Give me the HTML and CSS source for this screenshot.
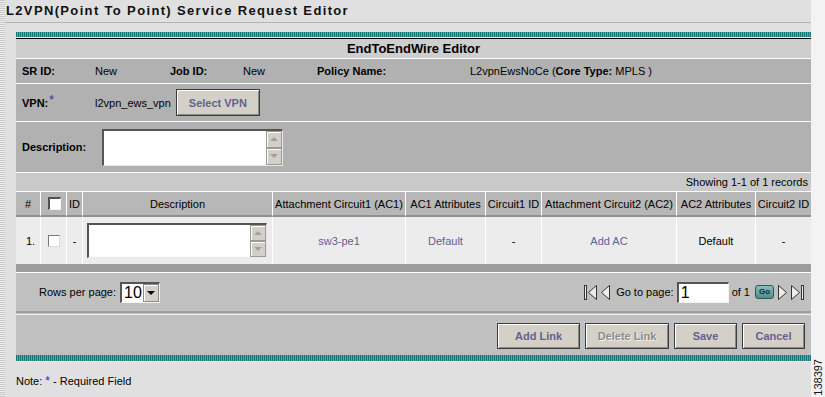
FILE: index.html
```html
<!DOCTYPE html>
<html>
<head>
<meta charset="utf-8">
<title>L2VPN Service Request Editor</title>
<link rel="stylesheet" href="styles.css">
</head>
<body>
<div class="page">
  <div class="strip"></div>
  <div class="main">
    <div class="title">L2VPN(Point To Point) Service Request Editor</div>
    <div class="panel">
      <div class="teal"></div>
      <div class="head">EndToEndWire Editor</div>
      <div class="info info-ids">
        <span class="lbl">SR ID:</span><span>New</span>
        <span class="lbl">Job ID:</span><span>New</span>
        <span class="lbl">Policy Name:</span><span>L2vpnEwsNoCe (<b>Core Type:</b> MPLS )</span>
      </div>
      <div class="info info-vpn">
        <span class="lbl">VPN:<sup class="req">*</sup></span>
        <span class="vpnval">l2vpn_ews_vpn<button class="btn btn-vpn">Select VPN</button></span>
      </div>
      <div class="info info-desc">
        <span class="lbl">Description:</span>
        <div class="tbox tbox-desc">
          <div class="tarea"></div>
          <div class="sb"><span class="sbb"><i class="tri-up"></i></span><span class="sbb"><i class="tri-down"></i></span></div>
        </div>
      </div>
      <div class="showing">Showing 1-1 of 1 records</div>
      <table class="grid">
        <colgroup>
          <col class="w-num"><col class="w-chk"><col class="w-id"><col class="w-desc"><col class="w-ac1"><col class="w-a1"><col class="w-c1"><col class="w-ac2"><col class="w-a2"><col class="w-c2">
        </colgroup>
        <thead>
          <tr>
            <th>#</th><th><span class="chk chk-h"></span></th><th>ID</th><th>Description</th><th>Attachment Circuit1 (AC1)</th><th>AC1 Attributes</th><th>Circuit1 ID</th><th>Attachment Circuit2 (AC2)</th><th>AC2 Attributes</th><th>Circuit2 ID</th>
          </tr>
        </thead>
        <tbody>
          <tr>
            <td class="num">1.</td><td><span class="chk chk-r"></span></td><td>-</td>
            <td class="dcell"><div class="tbox tbox-row"><div class="tarea"></div><div class="sb"><span class="sbb"><i class="tri-up"></i></span><span class="sbb"><i class="tri-down"></i></span></div></div></td>
            <td><a class="lnk">sw3-pe1</a></td><td><a class="lnk">Default</a></td><td>-</td><td><a class="lnk">Add AC</a></td><td>Default</td><td>-</td>
          </tr>
        </tbody>
      </table>
      <div class="band"></div>
      <div class="pager">
        <div class="rpp">Rows per page:<span class="sel"><span class="selv">10</span><span class="selb"><i class="tri-down dk"></i></span></span></div>
        <div class="nav">
          <svg class="ic" width="13" height="17" viewBox="0 0 13 17"><rect x="0.5" y="1.5" width="2" height="14" fill="#ececec" stroke="#333"/><path d="M12.5 1.5 L4.5 8.5 L12.5 15.5 Z" fill="#ececec" stroke="#333"/></svg>
          <svg class="ic" width="9" height="17" viewBox="0 0 9 17"><path d="M8.5 1.5 L0.5 8.5 L8.5 15.5 Z" fill="#ececec" stroke="#333"/></svg>
          <span class="gtp">Go to page:</span>
          <span class="pin">1</span>
          <span class="of">of 1</span>
          <span class="go">Go</span>
          <svg class="ic" width="9" height="17" viewBox="0 0 9 17"><path d="M0.5 1.5 L8.5 8.5 L0.5 15.5 Z" fill="#ececec" stroke="#333"/></svg>
          <svg class="ic" width="14" height="17" viewBox="0 0 14 17"><path d="M0.5 1.5 L8.5 8.5 L0.5 15.5 Z" fill="#ececec" stroke="#333"/><rect x="10.5" y="1.5" width="2" height="14" fill="#ececec" stroke="#333"/></svg>
        </div>
      </div>
      <div class="sep"></div>
      <div class="actions">
        <button class="btn btn-add">Add Link</button>
        <button class="btn btn-del">Delete Link</button>
        <button class="btn btn-save">Save</button>
        <button class="btn btn-cancel">Cancel</button>
      </div>
      <div class="teal teal-b"></div>
    </div>
    <div class="note">Note: <span class="req">*</span> - Required Field</div>
  </div>
  <div class="side"><span class="fig">138397</span></div>
</div>
</body>
</html>
```

FILE: styles.css
```css
* { box-sizing: border-box; }
html, body { margin: 0; padding: 0; }
body {
  width: 825px;
  height: 397px;
  overflow: hidden;
  background: #f3f3f3;
  font-family: "Liberation Sans", Arial, sans-serif;
  font-size: 11px;
  color: #000;
}
.page { display: flex; height: 397px; }
.strip {
  width: 5px;
  flex: none;
  background: repeating-linear-gradient(180deg, #c9c9c9 0 1px, #ececec 1px 2px);
}
.main {
  width: 806px;
  flex: none;
  background: #e0e0e0;
  display: flex;
  flex-direction: column;
}
.title {
  height: 23px;
  line-height: 22px;
  border-bottom: 1px solid #b3b3b3;
  padding-left: 1px;
  font-weight: bold;
  font-size: 13px;
  letter-spacing: 1.35px;
  color: #111;
  white-space: nowrap;
}
.panel { margin: 9px 0 0 11px; width: 795px; }
.teal {
  height: 6px;
  background: repeating-linear-gradient(90deg, #167777 0 1px, #5ba7a7 1px 2px);
  border-bottom: 1px solid #ececec;
}
.head {
  height: 21px;
  border-top: 1px solid #000;
  border-bottom: 1px solid #fff;
  background: #cecece;
  text-align: center;
  font-weight: bold;
  font-size: 13px;
  line-height: 19px;
}
.info {
  background: #b1b1b1;
  border-bottom: 1px solid #fff;
  display: grid;
  grid-template-columns: 73px 75px 73px 74px 153px 1fr;
  align-items: center;
  padding-left: 6px;
  white-space: nowrap;
}
.lbl { font-weight: bold; }
.info-ids { height: 25px; }
.info-vpn { height: 38px; }
.info-desc { height: 51px; grid-template-columns: 80px 1fr; }
.req { color: #2a2ab0; font-weight: normal; font-size: 12px; }
.lbl .req { vertical-align: 3px; font-size: 12px; line-height: 0; margin-left: 1px; }
.vpnval { display: flex; align-items: center; gap: 5px; grid-column: 2 / 7; }

.btn {
  font-family: "Liberation Sans", Arial, sans-serif;
  font-size: 11px;
  font-weight: bold;
  color: #62628f;
  background: #d4d0c8;
  border: 1px solid #3c3c3c;
  box-shadow: inset 1px 1px 0 #fff, inset -1px -1px 0 #8a8a8a;
  padding: 0;
  height: 26px;
  cursor: default;
}
.btn-vpn { width: 84px; height: 27px; }

.tbox { display: flex; background: #fff; border-top: 2px solid #555; border-left: 2px solid #555; border-right: 1px solid #e8e8e8; border-bottom: 1px solid #e8e8e8; }
.tarea { flex: 1; }
.sb { width: 16px; display: flex; flex-direction: column; background: #ececec; }
.sbb {
  flex: 1;
  display: flex;
  align-items: center;
  justify-content: center;
  background: #d4d0c8;
  border: 1px solid #9a9a9a;
  box-shadow: inset 1px 1px 0 #fff;
}
.tri-up { width: 0; height: 0; border-left: 4px solid transparent; border-right: 4px solid transparent; border-bottom: 4px solid #a0a0a0; }
.tri-down { width: 0; height: 0; border-left: 4px solid transparent; border-right: 4px solid transparent; border-top: 4px solid #a0a0a0; }
.tri-down.dk { border-top-color: #000; border-left-width: 4px; border-right-width: 4px; }
.tbox-desc { width: 181px; height: 37px; }
.tbox-row { width: 180px; height: 35px; }

.showing {
  height: 19px;
  background: #c9c9c9;
  border-bottom: 1px solid #fff;
  text-align: right;
  padding-right: 3px;
  line-height: 18px;
}

.grid { border-collapse: separate; border-spacing: 0; table-layout: fixed; width: 795px; }
.w-num { width: 24px; } .w-chk { width: 26px; } .w-id { width: 16px; } .w-desc { width: 190px; }
.w-ac1 { width: 133px; } .w-a1 { width: 80px; } .w-c1 { width: 56px; } .w-ac2 { width: 135px; }
.w-a2 { width: 79px; } .w-c2 { width: 56px; }
.grid th, .grid td {
  padding: 0;
  text-align: center;
  border-left: 1px solid #fff;
  white-space: nowrap;
  font-size: 11px;
}
.grid th:first-child, .grid td:first-child { border-left: none; }
.grid th {
  height: 25px;
  background: #b7b7b7;
  border-bottom: 2px solid #8f8f8f;
  font-weight: normal;
}
.grid td { height: 47px; background: #ececec; }
.grid td.num { padding-left: 5px; }
.grid td.dcell { padding: 0 0 0 4px; text-align: left; }
.chk { display: inline-block; vertical-align: middle; background: #fff; }
.chk-h { width: 13px; height: 13px; border-top: 2px solid #505050; border-left: 2px solid #505050; border-right: 1px solid #f4f4f4; border-bottom: 1px solid #f4f4f4; margin-left: 2px; }
.chk-r { width: 12px; height: 12px; border-top: 1px solid #7a7a7a; border-left: 1px solid #7a7a7a; border-right: 1px solid #dcdcdc; border-bottom: 1px solid #dcdcdc; margin-left: 0; }
.lnk { color: #5f5f98; text-decoration: none; }

.band { height: 9px; background: #9c9c9c; border-bottom: 1px solid #fff; }
.pager {
  height: 38px;
  background: #c0c0c0;
  display: flex;
  align-items: center;
  justify-content: space-between;
  padding: 0 6px 0 23px;
}
.rpp { display: flex; align-items: center; gap: 4px; }
.sel { display: flex; width: 40px; height: 21px; background: #fff; border-top: 2px solid #555; border-left: 2px solid #555; border-right: 1px solid #f4f4f4; border-bottom: 1px solid #f4f4f4; }
.selv { flex: 1; font-size: 16px; line-height: 18px; padding-left: 2px; }
.selb { width: 16px; display: flex; align-items: center; justify-content: center; background: #d4d0c8; border: 1px solid #8a8a8a; box-shadow: inset 1px 1px 0 #fff; }
.nav { display: flex; align-items: center; }
.ic { display: block; }
.nav .ic + .ic { margin-left: 4px; }
.gtp { margin-left: 6px; }
.pin { margin-left: 3px; width: 52px; height: 21px; background: #fff; border-top: 2px solid #555; border-left: 2px solid #555; border-right: 1px solid #f4f4f4; border-bottom: 1px solid #f4f4f4; font-size: 16px; line-height: 18px; padding-left: 2px; }
.of { margin-left: 3px; }
.go {
  margin: 0 4px 0 5px;
  width: 19px;
  height: 14px;
  border: 1px solid #2c5a5a;
  border-radius: 3px;
  background: linear-gradient(#8cbcbc, #4f8c8c);
  color: #0c2e2e;
  font-size: 8px;
  font-weight: bold;
  line-height: 12px;
  text-align: center;
}
.sep { height: 4px; background: #c0c0c0; border-top: 2px solid #9d9d9d; border-bottom: 1px solid #f0f0f0; }
.actions {
  height: 40px;
  background: #c0c0c0;
  display: flex;
  justify-content: flex-end;
  align-items: flex-start;
  gap: 5px;
  padding: 8px 6px 0 0;
}
.btn-add { width: 83px; }
.btn-del { width: 84px; color: #8c8c8c; text-shadow: 1px 1px 0 #f2f2f2; }
.btn-save { width: 63px; }
.btn-cancel { width: 63px; }
.teal-b { border-bottom: 1px solid #eaeaea; height: 7px; }
.note { margin-top: 12px; padding-left: 11px; line-height: 14px; }
.note .req { font-size: 12px; }
.side {
  flex: 1;
  display: flex;
  flex-direction: column;
  justify-content: flex-end;
  align-items: flex-start;
  padding-left: 2px;
}
.fig {
  writing-mode: vertical-rl;
  transform: rotate(180deg);
  font-size: 11px;
  line-height: 11px;
  margin-bottom: 1px;
  color: #111;
}
```
